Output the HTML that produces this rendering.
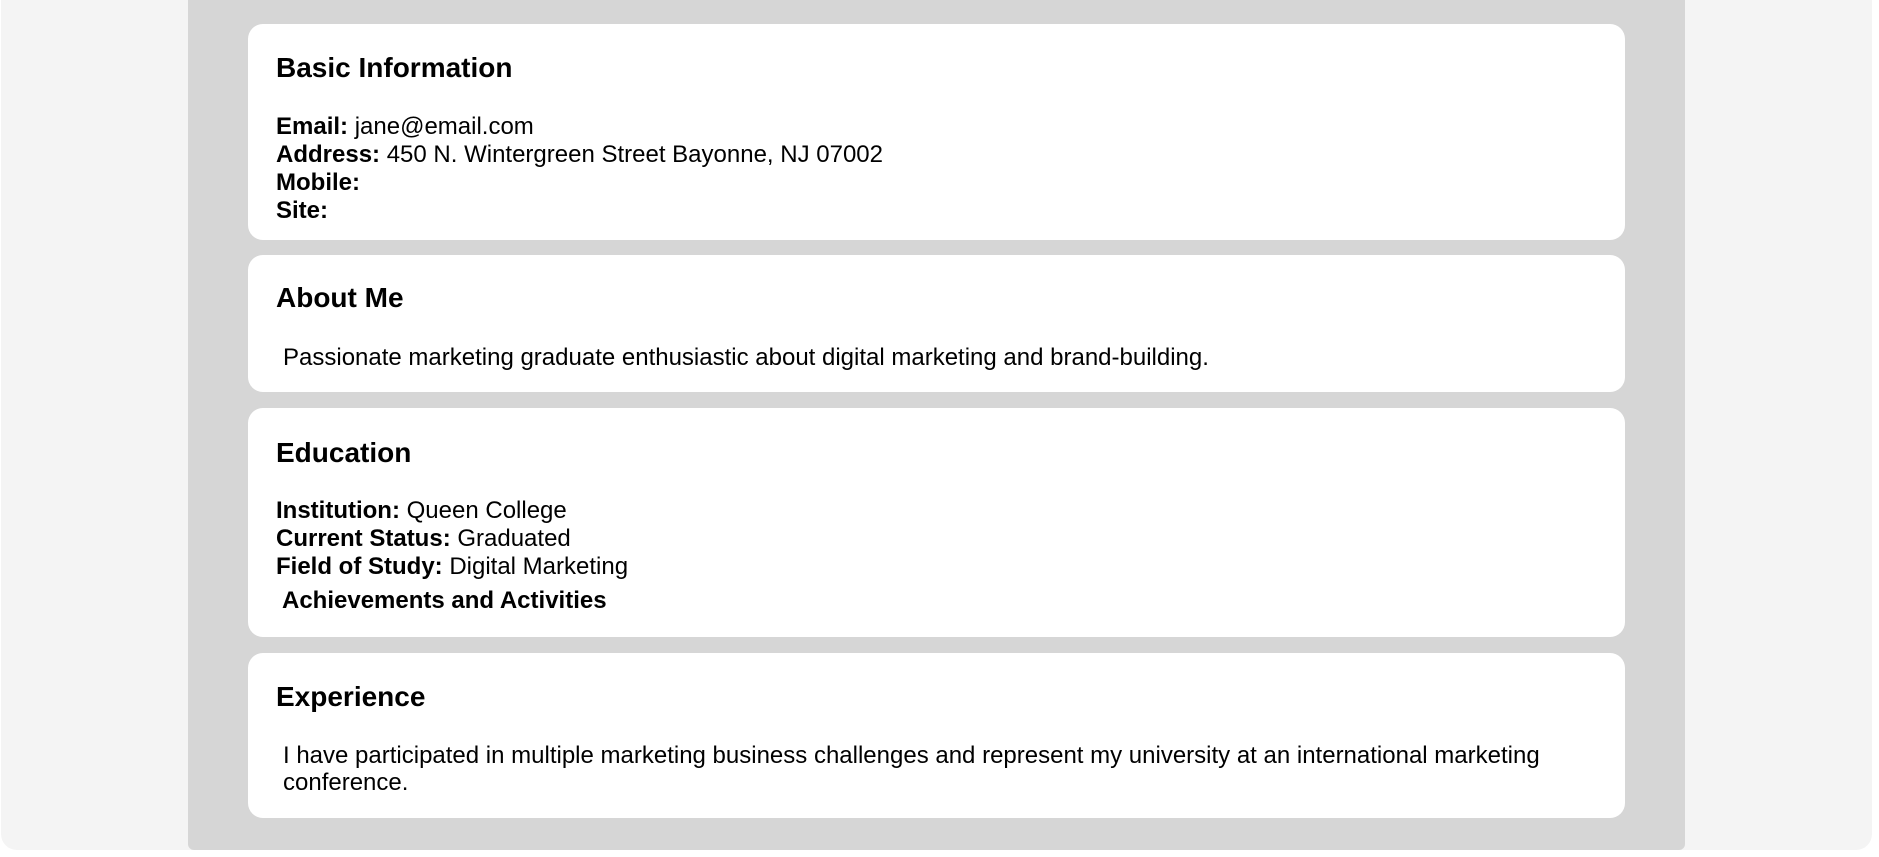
<!DOCTYPE html>
<html><head><meta charset="utf-8"><style>
*{margin:0;padding:0;box-sizing:border-box}
html,body{width:1879px;height:857px;background:#fff;overflow:hidden;font-family:"Liberation Sans",Arial,sans-serif;color:#000}
#outer{position:absolute;left:1px;top:0;width:1871px;height:850px;background:#f4f4f4;border-radius:0 0 16px 16px}
#gray{position:absolute;left:188px;top:0;width:1497px;height:850px;background:#d6d6d6;border-radius:0 0 6px 6px}
.card{position:absolute;left:248px;width:1377px;background:#fff;border-radius:15px}
.t{position:absolute;white-space:nowrap}
.h{font-size:28px;font-weight:bold;line-height:32px}
.b{font-size:24px;line-height:28px}
.a{font-size:24px;line-height:26px;font-weight:bold}
</style></head><body>
<div id="outer"></div>
<div id="gray"></div>
<div class="card" style="top:24px;height:216px"></div>
<div class="card" style="top:255px;height:137px"></div>
<div class="card" style="top:408px;height:229px"></div>
<div class="card" style="top:653px;height:165px"></div>

<div class="t h" style="left:276px;top:52px">Basic Information</div>
<div class="t b" style="left:276px;top:113px"><b>Email:</b> jane@email.com</div>
<div class="t b" style="left:276px;top:141px"><b>Address:</b> 450 N. Wintergreen Street Bayonne, NJ 07002</div>
<div class="t b" style="left:276px;top:169px"><b>Mobile:</b></div>
<div class="t b" style="left:276px;top:197px"><b>Site:</b></div>

<div class="t h" style="left:276px;top:282px">About Me</div>
<div class="t b" style="left:283px;top:344px">Passionate marketing graduate enthusiastic about digital marketing and brand-building.</div>

<div class="t h" style="left:276px;top:437px">Education</div>
<div class="t b" style="left:276px;top:497px"><b>Institution:</b> Queen College</div>
<div class="t b" style="left:276px;top:525px"><b>Current Status:</b> Graduated</div>
<div class="t b" style="left:276px;top:553px"><b>Field of Study:</b> Digital Marketing</div>
<div class="t a" style="left:282px;top:588px">Achievements and Activities</div>

<div class="t h" style="left:276px;top:681px">Experience</div>
<div class="t b" style="left:283px;top:742px">I have participated in multiple marketing business challenges and represent my university at an international marketing</div>
<div class="t b" style="left:283px;top:769px">conference.</div>
</body></html>
